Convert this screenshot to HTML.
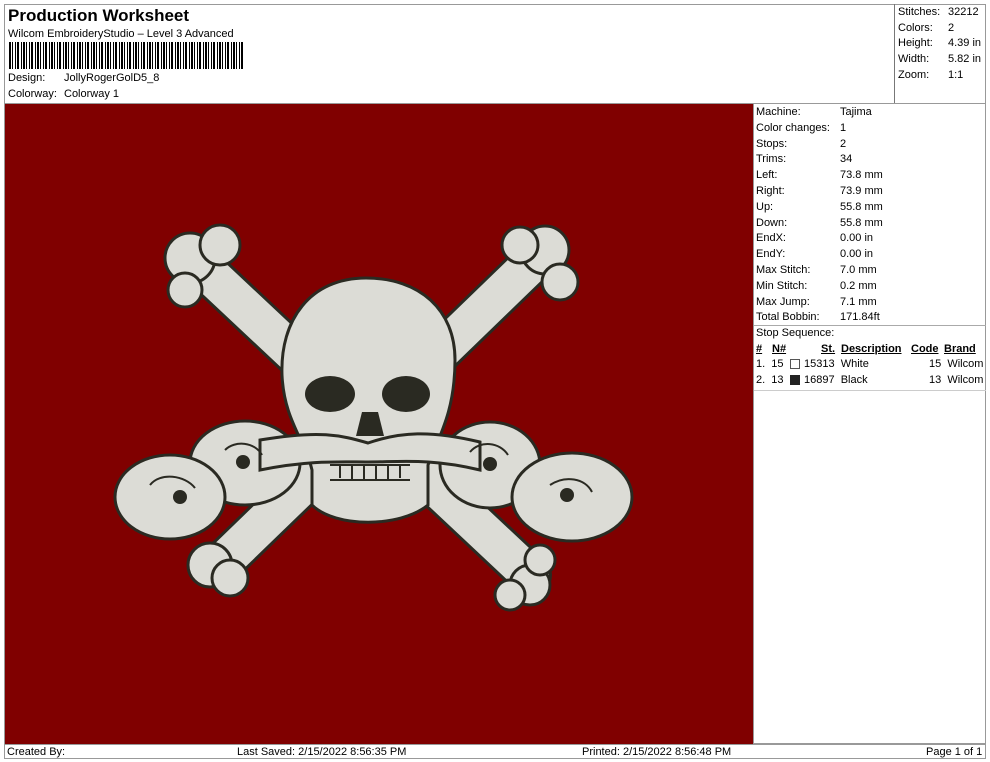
<!DOCTYPE html>
<html><head><meta charset="utf-8"><style>
*{margin:0;padding:0;box-sizing:border-box}
body{width:990px;height:762px;background:#fff;font-family:"Liberation Sans",Arial,sans-serif;color:#000;position:relative;overflow:hidden}
.a{position:absolute;white-space:nowrap}
.f{font-size:11px}
.bc{position:absolute;left:9px;top:42px;width:234px;height:27px;background:repeating-linear-gradient(90deg,#000 0 2px,#fff 2px 3px,#000 3px 4px,#fff 4px 6px,#000 6px 7px,#fff 7px 8px,#000 8px 10px,#fff 10px 12px,#000 12px 13px,#fff 13px 14px)}
</style></head><body>
<div class="a" style="left:4px;top:4px;width:982px;height:740px;border:1px solid #999"></div>
<div class="a" style="left:894px;top:4px;width:1px;height:100px;background:#777"></div>
<div class="a" style="left:4px;top:103px;width:982px;height:1px;background:#999"></div>
<div class="a" style="left:8px;top:6px;font-size:17px;font-weight:bold">Production Worksheet</div>
<div class="a f" style="left:8px;top:28px">Wilcom EmbroideryStudio – Level 3 Advanced</div>
<div class="bc"></div>
<div class="a f" style="left:8px;top:72px">Design:</div><div class="a f" style="left:64px;top:72px">JollyRogerGolD5_8</div>
<div class="a f" style="left:8px;top:88px">Colorway:</div><div class="a f" style="left:64px;top:88px">Colorway 1</div>
<div class="a f" style="left:898px;top:5px;line-height:15.7px">Stitches:<br>Colors:<br>Height:<br>Width:<br>Zoom:</div>
<div class="a f" style="left:948px;top:5px;line-height:15.7px">32212<br>2<br>4.39 in<br>5.82 in<br>1:1</div>
<div class="a" style="left:5px;top:104px;width:748px;height:640px;background:#800000">
<svg width="748" height="640" viewBox="5 104 748 640">
<g stroke-linecap="round">
<line x1="205" y1="270" x2="530" y2="575" stroke="#2a2a22" stroke-width="44"/>
<line x1="205" y1="270" x2="530" y2="575" stroke="#dcdcd6" stroke-width="38"/>
<line x1="530" y1="265" x2="220" y2="565" stroke="#2a2a22" stroke-width="44"/>
<line x1="530" y1="265" x2="220" y2="565" stroke="#dcdcd6" stroke-width="38"/>
</g>
<g stroke="#2a2a22" stroke-width="3" fill="#dcdcd6">
<circle cx="190" cy="258" r="25"/><circle cx="220" cy="245" r="20"/><circle cx="185" cy="290" r="17"/>
<circle cx="545" cy="250" r="24"/><circle cx="520" cy="245" r="18"/><circle cx="560" cy="282" r="18"/>
<circle cx="210" cy="565" r="22"/><circle cx="230" cy="578" r="18"/>
<circle cx="530" cy="585" r="20"/><circle cx="510" cy="595" r="15"/><circle cx="540" cy="560" r="15"/>
<path d="M366 278 C310 278 280 320 282 375 C284 420 305 440 312 470 L312 505 C335 528 400 528 428 505 L428 465 C440 435 455 410 455 360 C455 310 420 278 366 278 Z"/>
<ellipse cx="245" cy="463" rx="55" ry="42"/>
<ellipse cx="170" cy="497" rx="55" ry="42"/>
<ellipse cx="490" cy="465" rx="50" ry="43"/>
<ellipse cx="572" cy="497" rx="60" ry="44"/>
<path d="M260 440 C320 430 340 435 368 443 C400 432 430 430 480 442 L480 470 C430 458 400 462 368 462 C340 462 310 460 260 470 Z"/>
</g>
<g fill="#2a2a22">
<ellipse cx="330" cy="394" rx="25" ry="18"/>
<ellipse cx="406" cy="394" rx="24" ry="18"/>
<path d="M362 412 L378 412 L384 436 L356 436 Z"/>
<circle cx="243" cy="462" r="7"/><circle cx="180" cy="497" r="7"/>
<circle cx="490" cy="464" r="7"/><circle cx="567" cy="495" r="7"/>
</g>
<g fill="none" stroke="#2a2a22" stroke-width="2">
<path d="M330 465 L410 465 M340 465 L340 478 M352 465 L352 480 M364 465 L364 480 M376 465 L376 480 M388 465 L388 480 M400 465 L400 478 M330 480 L410 480"/>
<path d="M225 450 C235 440 255 442 262 455 M150 485 C160 472 185 475 195 488 M470 452 C480 440 500 442 508 455 M550 485 C565 475 585 478 592 492"/>
</g>
</svg>
</div>
<div class="a" style="left:753px;top:104px;width:1px;height:640px;background:#999"></div>
<div class="a f" style="left:756px;top:105px;line-height:15.8px">Machine:<br>Color changes:<br>Stops:<br>Trims:<br>Left:<br>Right:<br>Up:<br>Down:<br>EndX:<br>EndY:<br>Max Stitch:<br>Min Stitch:<br>Max Jump:<br>Total Bobbin:</div>
<div class="a f" style="left:840px;top:105px;line-height:15.8px">Tajima<br>1<br>2<br>34<br>73.8 mm<br>73.9 mm<br>55.8 mm<br>55.8 mm<br>0.00 in<br>0.00 in<br>7.0 mm<br>0.2 mm<br>7.1 mm<br>171.84ft</div>
<div class="a" style="left:754px;top:325px;width:232px;height:1px;background:#aaa"></div>
<div class="a f" style="left:756px;top:327px">Stop Sequence:</div>
<div class="a f" style="left:756px;top:343px;font-weight:bold;text-decoration:underline">#</div>
<div class="a f" style="left:772px;top:343px;font-weight:bold;text-decoration:underline">N#</div>
<div class="a f" style="left:821px;top:343px;font-weight:bold;text-decoration:underline">St.</div>
<div class="a f" style="left:841px;top:343px;font-weight:bold;text-decoration:underline">Description</div>
<div class="a f" style="left:911px;top:343px;font-weight:bold;text-decoration:underline">Code</div>
<div class="a f" style="left:944px;top:343px;font-weight:bold;text-decoration:underline">Brand</div>
<div class="a f" style="left:756px;top:358px">1.&nbsp; 15</div><div class="a" style="left:790px;top:359px;width:10px;height:10px;border:1px solid #555;background:#fff"></div>
<div class="a f" style="left:804px;top:358px">15313&nbsp; White</div><div class="a f" style="left:929px;top:358px">15&nbsp; Wilcom</div>
<div class="a f" style="left:756px;top:374px">2.&nbsp; 13</div><div class="a" style="left:790px;top:375px;width:10px;height:10px;background:#222"></div>
<div class="a f" style="left:804px;top:374px">16897&nbsp; Black</div><div class="a f" style="left:929px;top:374px">13&nbsp; Wilcom</div>
<div class="a" style="left:754px;top:390px;width:232px;height:1px;background:#ccc"></div>
<div class="a" style="left:4px;top:744px;width:982px;height:15px;border:1px solid #999"></div>
<div class="a f" style="left:7px;top:746px">Created By:</div>
<div class="a f" style="left:237px;top:746px">Last Saved: 2/15/2022 8:56:35 PM</div>
<div class="a f" style="left:582px;top:746px">Printed: 2/15/2022 8:56:48 PM</div>
<div class="a f" style="left:926px;top:746px">Page 1 of 1</div>
</body></html>
